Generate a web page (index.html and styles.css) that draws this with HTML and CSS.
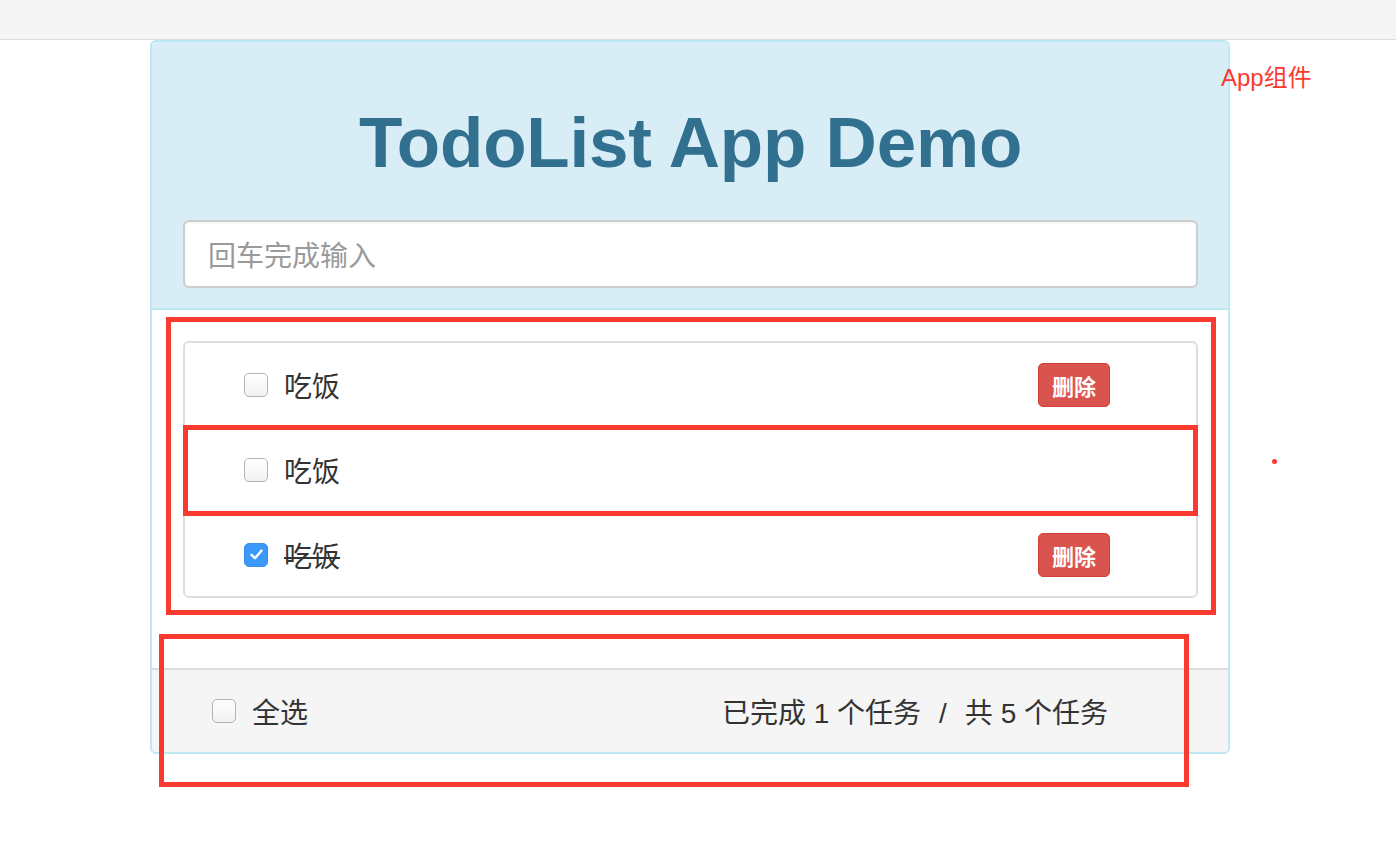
FILE: index.html
```html
<!DOCTYPE html>
<html lang="zh-CN">
<head>
<meta charset="utf-8">
<title>TodoList App Demo</title>
<link rel="stylesheet" href="styles.css">
</head>
<body>
<div class="topbar"></div>
<div class="page">
  <div class="panel">
    <div class="panel-heading">
      <h1 class="title">TodoList App Demo</h1>
      <div class="input-box"><span class="placeholder">回车完成输入</span></div>
    </div>
    <div class="panel-body">
      <ul class="list">
        <li class="item">
          <span class="check"></span>
          <span class="label">吃饭</span>
          <span class="btn-del">删除</span>
        </li>
        <li class="item">
          <span class="check"></span>
          <span class="label">吃饭</span>
        </li>
        <li class="item">
          <span class="check checked"><svg width="15" height="15" viewBox="0 0 15 15"><path d="M2.5 7.8 L6 11.2 L12.5 3.6" fill="none" stroke="#fff" stroke-width="2.4" stroke-linecap="round" stroke-linejoin="round"/></svg></span>
          <span class="label done">吃饭</span>
          <span class="btn-del">删除</span>
        </li>
      </ul>
    </div>
    <div class="panel-footer">
      <div class="select-all">
        <span class="check"></span>
        <span class="label">全选</span>
      </div>
      <div class="stats">已完成 1 个任务<span class="slash">/</span>共 5 个任务</div>
    </div>
  </div>
</div>

<div class="note note-app">App组件</div>
<div class="note-dot"></div>
<div class="anno anno-list"></div>
<div class="anno anno-item"></div>
<div class="anno anno-footer"></div>
</body>
</html>
```
FILE: styles.css
```css
html, body {
  margin: 0;
  padding: 0;
  background: #fff;
}
body {
  font-family: "Liberation Sans", "Noto Sans CJK SC", sans-serif;
  color: #333;
  position: relative;
  min-height: 854px;
}
.topbar {
  height: 39px;
  background: #f5f5f5;
  border-bottom: 1px solid #dcdcdc;
}
.page {
  padding-left: 150px;
}
.panel {
  width: 1076px;
  border: 2px solid #bce8f1;
  border-radius: 6px;
  overflow: hidden;
  background: #fff;
}
.panel-heading {
  background: #d9edf7;
  border-bottom: 2px solid #bce8f1;
  padding: 60px 30px 20px 31px;
}
.title {
  margin: 0;
  font-family: "Liberation Sans", sans-serif;
  font-weight: 700;
  font-size: 71px;
  line-height: 81px;
  letter-spacing: -0.2px;
  color: #31708f;
  text-align: center;
}
.input-box {
  margin-top: 37px;
  height: 64px;
  border: 2px solid #cdcdcd;
  border-radius: 6px;
  background: #fff;
  box-shadow: inset 0 1px 2px rgba(0,0,0,0.06);
  display: flex;
  align-items: center;
  padding-left: 23px;
}
.placeholder {
  font-size: 28px;
  color: #9a9a9a;
}
.panel-body {
  padding: 31px 30px 70px 31px;
}
.list {
  list-style: none;
  margin: 0;
  padding: 0;
  border: 2px solid #dedede;
  border-radius: 6px;
}
.item {
  display: flex;
  align-items: center;
  height: 83px;
  padding: 0 86px 0 59px;
  border-top: 2px solid #dedede;
}
.item:first-child {
  border-top: none;
}
.check {
  width: 22px;
  height: 22px;
  border: 1px solid #b3b3b3;
  border-radius: 5px;
  background: linear-gradient(#fff, #f1f1f1);
  margin-right: 16px;
  flex: none;
  display: flex;
  align-items: center;
  justify-content: center;
}
.check.checked {
  background: #3b99fc;
  border-color: #3b8fe8;
}
.label {
  font-size: 28px;
  color: #333;
}
.label.done {
  text-decoration: line-through;
}
.btn-del {
  margin-left: auto;
  width: 70px;
  height: 42px;
  border: 1px solid #d43f3a;
  border-radius: 5px;
  background: #d9534f;
  color: #fff;
  font-size: 22px;
  font-weight: 700;
  display: flex;
  align-items: center;
  justify-content: center;
}
.panel-footer {
  background: #f5f5f5;
  border-top: 2px solid #dddddd;
  height: 82px;
  display: flex;
  align-items: center;
  justify-content: space-between;
  padding: 0 120px 0 60px;
}
.select-all {
  display: flex;
  align-items: center;
}
.stats {
  font-size: 28px;
  color: #333;
}
.slash {
  margin: 0 18px;
}
.note {
  position: absolute;
  color: #fb3a2f;
  font-size: 24px;
}
.note-app {
  left: 1221px;
  top: 58px;
}
.note-dot {
  position: absolute;
  left: 1272px;
  top: 459px;
  width: 5px;
  height: 5px;
  border-radius: 50%;
  background: #fb3a2f;
}
.anno {
  position: absolute;
  border: 5px solid #fb3a2f;
  box-sizing: border-box;
}
.anno-list {
  left: 166px;
  top: 317px;
  width: 1050px;
  height: 298px;
}
.anno-item {
  left: 183px;
  top: 425px;
  width: 1015px;
  height: 91px;
}
.anno-footer {
  left: 159px;
  top: 634px;
  width: 1030px;
  height: 153px;
}
```
